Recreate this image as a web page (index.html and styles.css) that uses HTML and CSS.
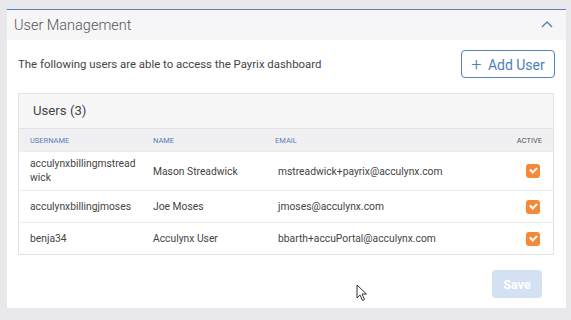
FILE: index.html
```html
<!DOCTYPE html>
<html lang="en">
<head>
    <meta charset="UTF-8">
    <title>User Management</title>
    <link rel="stylesheet" href="styles.css">
</head>
<body>

    <div class="panel">
        <div class="panel-header">
            <span class="panel-title">User Management</span>
            <svg class="chevron" width="12" height="8" viewBox="0 0 12 8"><path d="M1 7 L6 2 L11 7" fill="none" stroke="#4f7fb8" stroke-width="1.4"/></svg>
        </div>

        <div class="panel-body">
            <div class="intro">
                <span>The following users are able to access the Payrix dashboard</span>
                <button class="btn-outline"><span class="plus">+</span> Add User</button>
            </div>

            <div class="users-card">
                <div class="users-title">Users (3)</div>
                <div class="users-row head">
                    <div>Username</div>
                    <div>Name</div>
                    <div class="email-head">Email</div>
                    <div class="active">Active</div>
                </div>
                <div class="users-row">
                    <div class="username">acculynxbillingmstreadwick</div>
                    <div>Mason Streadwick</div>
                    <div>mstreadwick+payrix@acculynx.com</div>
                    <div class="active"><span class="check"></span></div>
                </div>
                <div class="users-row">
                    <div class="username">acculynxbillingjmoses</div>
                    <div>Joe Moses</div>
                    <div>jmoses@acculynx.com</div>
                    <div class="active"><span class="check"></span></div>
                </div>
                <div class="users-row">
                    <div class="username">benja34</div>
                    <div>Acculynx User</div>
                    <div>bbarth+accuPortal@acculynx.com</div>
                    <div class="active"><span class="check"></span></div>
                </div>
            </div>

            <div class="footer">
                <button class="btn-save" disabled>Save</button>
            </div>
        </div>
    </div>

    <svg class="cursor" width="12" height="18" viewBox="0 0 12 18"><path d="M1 1 L1 14 L4 11 L6.5 16.5 L8.5 15.5 L6 10 L10.5 10 Z" fill="#fff" stroke="#333" stroke-width="1"/></svg>

</body>
</html>
```

FILE: styles.css
```css
body {
    margin: 0;
    padding: 9px 5px 12px 7px;
    background-color: #e8e8eb;
    font-family: Roboto, 'Liberation Sans', sans-serif;
    color: #444;
    position: relative;
}

.panel {
    background-color: #fff;
    border-top: 1px solid #5583bb;
}

.panel-header {
    height: 30px;
    background-color: #f6f6f8;
    display: flex;
    align-items: center;
    justify-content: space-between;
    padding: 0 13px 0 7px;
}

.panel-title {
    font-size: 14.5px;
    font-weight: 300;
    color: #555;
}

.chevron {
    margin-top: -2px;
}

.panel-body {
    padding: 10px 11px 10px 11px;
}

.intro {
    display: flex;
    justify-content: space-between;
    align-items: center;
    font-size: 11.4px;
    color: #444;
}

.btn-outline {
    height: 28px;
    width: 94px;
    border: 1px solid #5583bb;
    border-radius: 4px;
    background: #fff;
    color: #4f7fb8;
    font-family: Roboto, 'Liberation Sans', sans-serif;
    font-size: 14px;
    padding: 0;
}

.plus {
    font-size: 18px;
    font-weight: 300;
    margin-right: 3px;
    vertical-align: -1px;
}

.users-card {
    margin-top: 15px;
    margin-right: 1px;
    border: 1px solid #e2e2e5;
}

.users-title {
    height: 34px;
    line-height: 34px;
    background-color: #f7f7f8;
    padding-left: 14px;
    font-size: 13.2px;
    color: #444;
    border-bottom: 1px solid #e2e2e5;
}

.users-row {
    display: grid;
    grid-template-columns: 123px 125px 1fr 40px;
    align-items: center;
    padding: 0 11px 0 11px;
    min-height: 31px;
    font-size: 10.3px;
    border-top: 1px solid #ececef;
}

.users-row.head {
    min-height: 22px;
    background-color: #f0f0f3;
    border-top: none;
    font-size: 7.5px;
    text-transform: uppercase;
    color: #5b7bbd;
}

.email-head {
    margin-left: -3px;
}

.username {
    word-break: break-all;
    padding: 5px 17px 5px 0;
    line-height: 14px;
}

.head .active {
    color: #555;
    text-align: right;
}

.active {
    display: flex;
    justify-content: flex-end;
    padding-right: 2px;
}

.head.users-row .active {
    display: block;
    padding-right: 0;
}

.check {
    width: 14px;
    height: 14px;
    border-radius: 3px;
    background-color: #f5883a;
    position: relative;
}

.check::after {
    content: '';
    position: absolute;
    left: 4px;
    top: 3px;
    width: 5px;
    height: 3px;
    border-left: 2px solid #fff;
    border-bottom: 2px solid #fff;
    transform: rotate(-45deg);
}

.footer {
    display: flex;
    justify-content: flex-end;
    margin-top: 15px;
    padding-right: 13px;
}

.btn-save {
    width: 50px;
    height: 28px;
    border: none;
    border-radius: 4px;
    background-color: #d4e1f3;
    color: #fff;
    font-family: Roboto, 'Liberation Sans', sans-serif;
    font-size: 12.5px;
    font-weight: bold;
}

.cursor {
    position: absolute;
    left: 356px;
    top: 284px;
}
```
